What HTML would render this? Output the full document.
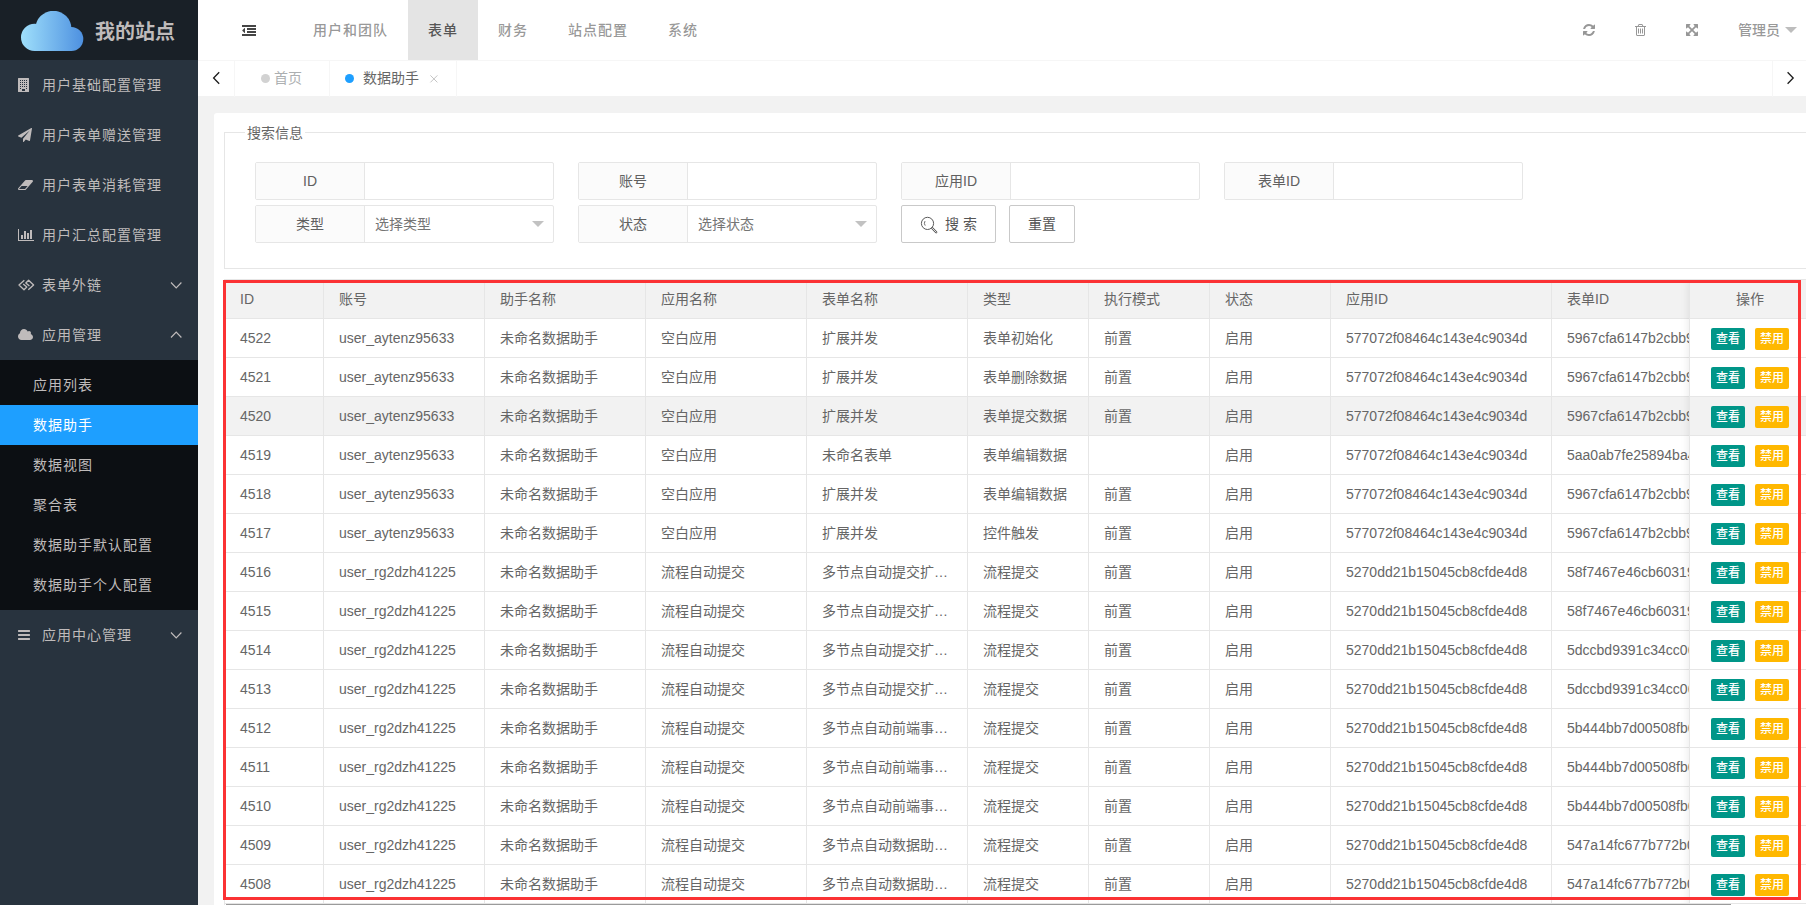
<!DOCTYPE html>
<html lang="zh-CN"><head><meta charset="utf-8"><title>我的站点</title>
<style>
*{box-sizing:border-box;margin:0;padding:0}
html,body{width:1806px;height:905px;overflow:hidden}
body{position:relative;background:#f2f2f2;font:14px/24px "Liberation Sans","Noto Sans CJK SC",sans-serif;color:#666}
svg{display:block}
.abs{position:absolute}
/* sidebar */
.side{position:absolute;left:0;top:0;width:198px;height:905px;background:#28333e}
.logo{position:absolute;left:0;top:0;width:198px;height:60px;background:#192027}
.logo h1{position:absolute;left:95px;top:2px;line-height:60px;font-size:20px;font-weight:700;color:#bfbbbb;letter-spacing:0;white-space:nowrap}
.mi{position:absolute;left:0;width:198px;height:50px;line-height:50px;color:#bfbbbb;white-space:nowrap}
.mi .tx{position:absolute;left:42px;top:0;letter-spacing:1px}
.mi svg{position:absolute}
.sub{position:absolute;left:0;top:360px;width:198px;height:250px;background:#0c0f13}
.si{position:absolute;left:0;width:198px;height:40px;line-height:40px;color:#bfbbbb;letter-spacing:1px;padding-left:33px;white-space:nowrap}
.si.on{background:#1e9fff;color:#fff}
/* header */
.hd{position:absolute;left:198px;top:0;width:1608px;height:60px;background:#fff}
.nav{font-weight:500;position:absolute;top:0;height:60px;line-height:60px;padding:0 20px;letter-spacing:1px;color:rgba(107,107,107,.7);white-space:nowrap}
.nav.on{background:#e4e4e4;color:#565656}
.user{font-weight:500;position:absolute;left:1540px;top:0;line-height:60px;color:rgba(107,107,107,.7);white-space:nowrap}
.tri{position:absolute;width:0;height:0;border:6px solid transparent;border-top-color:#c2c2c2}
/* tabs */
.tabs{position:absolute;left:198px;top:60px;width:1608px;height:36px;background:#fff;border-top:1px solid #f6f6f6}
.tabs .sep{position:absolute;top:0;width:1px;height:36px;background:#f6f6f6}
.tab{position:absolute;top:0;height:35px;line-height:35px;white-space:nowrap}
.dot{position:absolute;width:8px;height:8px;border-radius:50%}
/* card */
.card{position:absolute;left:214px;top:113px;width:1700px;height:900px;background:#fff;border-radius:3px}
.fs{position:absolute;left:224px;top:132px;width:1700px;height:137px;border:1px solid #e6e6e6}
.lg{position:absolute;left:245px;top:120px;height:26px;line-height:26px;padding:0 2px;background:#fff;color:#666;font-size:14px;white-space:nowrap}
.grp{position:absolute;width:299px;height:38px;border:1px solid #e6e6e6;border-radius:2px;background:#fff}
.grp .lb{position:absolute;left:0;top:0;width:109px;height:36px;line-height:36px;text-align:center;background:#fbfbfb;border-right:1px solid #e6e6e6;color:#606060;white-space:nowrap}
.grp .ph{position:absolute;left:119px;top:0;line-height:36px;color:#757575;white-space:nowrap}
.grp .tri{left:276px;top:15px}
.bt{position:absolute;top:205px;height:38px;border:1px solid #c9c9c9;border-radius:2px;background:#fff;color:#555;line-height:36px;white-space:nowrap}
/* table */
.tview{position:absolute;left:224px;top:279px;width:1600px;height:640px;border:1px solid #e6e6e6;background:#fff;overflow:hidden}
.tbl{position:absolute;left:0;top:0;border-collapse:separate;border-spacing:0;table-layout:fixed;width:1588px}
.tbl th,.tbl td{height:39px;border-right:1px solid #e6e6e6;border-bottom:1px solid #e6e6e6;font-weight:400;text-align:left;padding:0;color:#666}
.tbl th{background:#f2f2f2}
.tbl .c{height:38px;line-height:38px;padding:0 15px;overflow:hidden;white-space:nowrap}
.tbl tr.hov td{background:#f2f2f2}
.fixr{position:absolute;left:1464px;top:0;width:121px;height:640px;background:#fff;border-left:1px solid #e6e6e6;box-shadow:-1px 0 8px rgba(0,0,0,.08)}
.fh{height:39px;line-height:38px;text-align:center;background:#f2f2f2;border-bottom:1px solid #e6e6e6;color:#666}
.fr{position:relative;height:39px;border-bottom:1px solid #e6e6e6}
.fr.hov{background:#f2f2f2}
.btn{position:absolute;top:9px;width:34px;height:22px;line-height:22px;border-radius:2px;color:#fff;font-size:12px;font-weight:500;text-align:center;white-space:nowrap}
.btn.g{left:21px;background:#009688}
.btn.y{left:65px;background:#ffb800}
.redbox{position:absolute;left:223px;top:280px;width:1578px;height:620px;border:3px solid #fb3234}
.sb{position:absolute;left:226px;top:903px;width:1505px;height:2px;background:linear-gradient(#e4e4e4 0,#e4e4e4 50%,#9b9b9b 50%,#9b9b9b 100%)}

</style></head>
<body>
<div class="side">
  <div class="logo">
    <svg class="abs" style="left:21px;top:11px" width="63" height="40" viewBox="0 0 63 40"><defs><linearGradient id="cg" gradientUnits="userSpaceOnUse" x1="0" y1="0" x2="62.5" y2="0"><stop offset="0" stop-color="#9fdffb"/><stop offset="1" stop-color="#4d90e0"/></linearGradient></defs><g fill="url(#cg)"><circle cx="13.6" cy="26.4" r="13.6"/><circle cx="32.4" cy="17.9" r="18.1"/><circle cx="50.3" cy="28" r="12"/><rect x="13.6" y="28" width="36.7" height="12"/></g></svg>
    <h1>我的站点</h1>
  </div>
  <div class="mi" style="top:60px"><span class="tx">用户基础配置管理</span></div>
  <div class="mi" style="top:110px"><span class="tx">用户表单赠送管理</span></div>
  <div class="mi" style="top:160px"><span class="tx">用户表单消耗管理</span></div>
  <div class="mi" style="top:210px"><span class="tx">用户汇总配置管理</span></div>
  <div class="mi" style="top:260px"><span class="tx">表单外链</span></div>
  <div class="mi" style="top:310px"><span class="tx">应用管理</span></div>
  <div class="sub">
    <div class="si" style="top:5px">应用列表</div>
    <div class="si on" style="top:45px">数据助手</div>
    <div class="si" style="top:85px">数据视图</div>
    <div class="si" style="top:125px">聚合表</div>
    <div class="si" style="top:165px">数据助手默认配置</div>
    <div class="si" style="top:205px">数据助手个人配置</div>
  </div>
  <div class="mi" style="top:610px"><span class="tx">应用中心管理</span></div>

  <svg class="abs" style="left:18px;top:78px" width="11" height="14" viewBox="0 0 1408 1792" preserveAspectRatio="none"><path fill="#bfbbbb" fill-rule="evenodd" d="M64 0h1280q64 0 64 64v1664q0 64-64 64h-1280q-64 0-64-64v-1664q0-64 64-64zM256 256h128v128h-128zM512 256h128v128h-128zM768 256h128v128h-128zM1024 256h128v128h-128zM256 512h128v128h-128zM512 512h128v128h-128zM768 512h128v128h-128zM1024 512h128v128h-128zM256 768h128v128h-128zM512 768h128v128h-128zM768 768h128v128h-128zM1024 768h128v128h-128zM256 1024h128v128h-128zM512 1024h128v128h-128zM768 1024h128v128h-128zM1024 1024h128v128h-128zM256 1280h128v128h-128zM1024 1280h128v128h-128zM512 1408h384v256h-384z"/></svg>
  <svg class="abs" style="left:18px;top:128px" width="14.0003" height="14" viewBox="0 0 1792 1792" preserveAspectRatio="none"><path fill="#bfbbbb" fill-rule="evenodd" d="M1764 11q33 24 27 64l-256 1536q-5 29-32 45-14 8-31 8-11 0-24-5l-453-185-242 295q-18 23-49 23-13 0-22-4-19-7-30.500-23.500t-11.500-36.500v-349l864-1059-1069 925-395-162q-37-14-40-55-2-40 32-59l1664-960q15-9 32-9 20 0 36 11z"/></svg>
  <svg class="abs" style="left:18px;top:180px" width="14.9996" height="10" viewBox="0 256 1920 1280" preserveAspectRatio="none"><path fill="#bfbbbb" fill-rule="evenodd" d="M896 1408l336-384h-768l-336 384h768zm1013-1077q15 34 9.500 71.500t-30.500 65.500l-896 1024q-38 44-96 44h-768q-38 0-69.500-20.500t-47.500-54.500q-15-34-9.500-71.500t30.500-65.500l896-1024q38-44 96-44h768q38 0 69.500 20.500t47.500 54.500z"/></svg>
  <svg class="abs" style="left:18px;top:229px" width="16" height="12" viewBox="0 128 2048 1536" preserveAspectRatio="none"><path fill="#bfbbbb" fill-rule="evenodd" d="M640 896v512h-256v-512h256zm384-512v1024h-256v-1024h256zm1024 1152v128h-2048v-1536h128v1408h1920zm-640-896v768h-256v-768h256zm384-384v1152h-256v-1152h256z"/></svg>
  <svg class="abs" style="left:14px;top:274px" width="26" height="22" viewBox="14 274 26 22"><g fill="none" stroke="#bfbbbb" stroke-width="1.35" stroke-linejoin="round" stroke-linecap="butt"><path d="M24.3 280.2 L19 285 L24 289.7 L26.8 287.1 L23.2 283.9"/><path d="M28.3 289.8 L33.6 285 L28.6 280.3 L25.8 282.9 L29.4 286.1"/></g></svg>
  <svg class="abs" style="left:18px;top:329px" width="15" height="11" viewBox="0 128 1920 1408" preserveAspectRatio="none"><path fill="#bfbbbb" fill-rule="evenodd" d="M1920 1152q0 159-112.500 271.500t-271.500 112.500h-1088q-185 0-316.500-131.500t-131.500-316.500q0-132 71-241.500t187-163.500q-2-28-2-43 0-212 150-362t362-150q158 0 286.500 88t187.500 230q70-62 166-62 106 0 181 75t75 181q0 75-41 138 129 30 213 134.500t84 239.500z"/></svg>
  <svg class="abs" style="left:18px;top:630px" width="12" height="10" viewBox="0 256 1536 1280" preserveAspectRatio="none"><path fill="#bfbbbb" fill-rule="evenodd" d="M1536 1344v128q0 26-19 45t-45 19h-1408q-26 0-45-19t-19-45v-128q0-26 19-45t45-19h1408q26 0 45 19t19 45zm0-512v128q0 26-19 45t-45 19h-1408q-26 0-45-19t-19-45v-128q0-26 19-45t45-19h1408q26 0 45 19t19 45zm0-512v128q0 26-19 45t-45 19h-1408q-26 0-45-19t-19-45v-128q0-26 19-45t45-19h1408q26 0 45 19t19 45z"/></svg>
  <svg class="abs" style="left:168px;top:278px" width="16" height="14" viewBox="0 0 16 14"><path d="M3 4.5 L8.2 9.8 L13.4 4.5" fill="none" stroke="#bfbbbb" stroke-width="1.2"/></svg>
  <svg class="abs" style="left:168px;top:328px" width="16" height="14" viewBox="0 0 16 14"><path d="M3 9.5 L8.2 4.2 L13.4 9.5" fill="none" stroke="#bfbbbb" stroke-width="1.2"/></svg>
  <svg class="abs" style="left:168px;top:628px" width="16" height="14" viewBox="0 0 16 14"><path d="M3 4.5 L8.2 9.8 L13.4 4.5" fill="none" stroke="#bfbbbb" stroke-width="1.2"/></svg>
</div>
<div class="hd">
  <div class="nav" style="left:95px">用户和团队</div>
  <div class="nav on" style="left:210px">表单</div>
  <div class="nav" style="left:280px">财务</div>
  <div class="nav" style="left:350px">站点配置</div>
  <div class="nav" style="left:450px">系统</div>
  <svg class="abs" style="left:44px;top:25px" width="14" height="11" viewBox="0 128 1792 1408" preserveAspectRatio="none"><path fill="#454545" fill-rule="evenodd" d="M384 544v576q0 13-9.500 22.500t-22.500 9.500q-14 0-23-9l-288-288q-9-9-9-23t9-23l288-288q9-9 23-9 13 0 22.500 9.500t9.500 22.500zm1408 768v192q0 13-9.500 22.500t-22.500 9.500h-1728q-13 0-22.500-9.500t-9.500-22.500v-192q0-13 9.500-22.500t22.500-9.500h1728q13 0 22.500 9.500t9.500 22.500zm0-384v192q0 13-9.500 22.500t-22.500 9.500h-1088q-13 0-22.500-9.500t-9.500-22.500v-192q0-13 9.500-22.500t22.500-9.500h1088q13 0 22.500 9.500t9.500 22.500zm0-384v192q0 13-9.500 22.500t-22.500 9.500h-1088q-13 0-22.500-9.500t-9.500-22.500v-192q0-13 9.500-22.500t22.500-9.500h1088q13 0 22.500 9.500t9.500 22.500zm0-384v192q0 13-9.500 22.500t-22.500 9.500h-1728q-13 0-22.500-9.500t-9.500-22.500v-192q0-13 9.500-22.500t22.500-9.500h1728q13 0 22.500 9.500t9.500 22.500z"/></svg>
  <svg class="abs" style="left:1385px;top:24px" width="12" height="12" viewBox="0 128 1536 1536" preserveAspectRatio="none"><path fill="#979797" fill-rule="evenodd" d="M1511 1056q0 5-1 7-64 268-268 434.500t-478 166.500q-146 0-282.500-55t-243.500-157l-129 129q-19 19-45 19t-45-19-19-45v-448q0-26 19-45t45-19h448q26 0 45 19t19 45-19 45l-137 137q71 66 161 102t187 36q134 0 250-65t186-179q11-17 53-117 8-23 30-23h192q13 0 22.500 9.500t9.500 22.500zm25-800v448q0 26-19 45t-45 19h-448q-26 0-45-19t-19-45 19-45l138-138q-148-137-349-137-134 0-250 65t-186 179q-11 17-53 117-8 23-30 23h-199q-13 0-22.500-9.500t-9.500-22.500v-7q65-268 270-434.500t480-166.500q146 0 284 55.500t245 156.500l130-129q19-19 45-19t45 19 19 45z"/></svg>
  <svg class="abs" style="left:1437px;top:24px" width="11" height="12" viewBox="0 192 1408 1536" preserveAspectRatio="none"><path fill="#979797" fill-rule="evenodd" d="M512 800v576q0 14-9 23t-23 9h-64q-14 0-23-9t-9-23v-576q0-14 9-23t23-9h64q14 0 23 9t9 23zm256 0v576q0 14-9 23t-23 9h-64q-14 0-23-9t-9-23v-576q0-14 9-23t23-9h64q14 0 23 9t9 23zm256 0v576q0 14-9 23t-23 9h-64q-14 0-23-9t-9-23v-576q0-14 9-23t23-9h64q14 0 23 9t9 23zm128 724v-948h-896v948q0 22 7 40.500t14.500 27 10.500 8.500h832q3 0 10.500-8.500t14.500-27 7-40.500zm-672-1076h448l-48-117q-7-9-17-11h-317q-10 2-17 11zm928 32v64q0 14-9 23t-23 9h-96v948q0 83-47 143.500t-113 60.500h-832q-66 0-113-58.500t-47-141.500v-952h-96q-14 0-23-9t-9-23v-64q0-14 9-23t23-9h309l70-167q15-37 54-63t79-26h320q40 0 79 26t54 63l70 167h309q14 0 23 9t9 23z"/></svg>
  <svg class="abs" style="left:1488px;top:24px" width="12" height="12" viewBox="0 0 1536 1536" preserveAspectRatio="none"><path fill="#979797" fill-rule="evenodd" d="M1283 413l-355 355 355 355 144-144q29-31 70-14 39 17 39 59v448q0 26-19 45t-45 19h-448q-42 0-59-40-17-39 14-69l144-144-355-355-355 355 144 144q31 30 14 69-17 40-59 40h-448q-26 0-45-19t-19-45v-448q0-42 40-59 39-17 69 14l144 144 355-355-355-355-144 144q-19 19-45 19-12 0-24-5-40-17-40-59v-448q0-26 19-45t45-19h448q42 0 59 40 17 39-14 69l-144 144 355 355 355-355-144-144q-31-30-14-69 17-40 59-40h448q26 0 45 19t19 45v448q0 42-39 59-13 5-25 5-26 0-45-19z"/></svg>
  <div class="user">管理员</div>
  <div class="tri" style="left:1587px;top:27px;border-top-color:#bdbdbd"></div>
</div>
<div class="tabs">
  <div class="sep" style="left:36px"></div>
  <div class="sep" style="left:131px"></div>
  <div class="sep" style="left:258px"></div>
  <div class="sep" style="left:1574px"></div>
  <div class="dot" style="left:63px;top:13px;background:#d2d2d2;width:9px;height:9px"></div>
  <div class="tab" style="left:76px;color:#acafb1">首页</div>
  <div class="dot" style="left:147px;top:13px;background:#1e9fff;width:9px;height:9px"></div>
  <div class="tab" style="left:165px;color:#666">数据助手</div>
  <svg class="abs" style="left:10px;top:7px" width="16" height="20" viewBox="0 0 16 20"><path d="M11.2 4.2 L5.6 10 L11.2 15.8" fill="none" stroke="#1c1c1c" stroke-width="1.3"/></svg>
  <svg class="abs" style="left:1584px;top:7px" width="16" height="20" viewBox="0 0 16 20"><path d="M5.6 4.2 L11.2 10 L5.6 15.8" fill="none" stroke="#1c1c1c" stroke-width="1.3"/></svg>
  <svg class="abs" style="left:230px;top:12.4px" width="12" height="12" viewBox="0 0 12 12"><path d="M2.4 2.4 L9.4 9.4 M9.4 2.4 L2.4 9.4" fill="none" stroke="#c4c4c4" stroke-width="1"/></svg>
</div>
<div class="card"></div>
<div class="fs"></div>
<div class="lg">搜索信息</div>
<div class="grp" style="left:255px;top:162px"><div class="lb">ID</div></div>
<div class="grp" style="left:578px;top:162px"><div class="lb">账号</div></div>
<div class="grp" style="left:901px;top:162px"><div class="lb">应用ID</div></div>
<div class="grp" style="left:1224px;top:162px"><div class="lb">表单ID</div></div>
<div class="grp" style="left:255px;top:205px"><div class="lb">类型</div><div class="ph">选择类型</div><div class="tri"></div></div>
<div class="grp" style="left:578px;top:205px"><div class="lb">状态</div><div class="ph">选择状态</div><div class="tri"></div></div>
<div class="bt" style="left:901px;width:95px"><svg class="abs" style="left:17px;top:9px" width="20" height="20" viewBox="0 0 20 20"><circle cx="8.5" cy="8.4" r="6.1" fill="none" stroke="#5a5a5a" stroke-width="1"/><path d="M13.3 13.3 L17.2 17.2" stroke="#5a5a5a" stroke-width="2.3" stroke-linecap="round"/><path d="M13.4 13.4 L17.1 17.1" stroke="#fff" stroke-width="0.8" stroke-linecap="round"/><path d="M6 6.1 Q4.6 8.4 6.2 10.6" fill="none" stroke="#5a5a5a" stroke-width="0.9"/></svg><span class="abs" style="left:43px;top:0">搜 索</span></div>
<div class="bt" style="left:1009px;width:66px;text-align:center">重置</div>

<div class="tview">
<table class="tbl"><colgroup><col style="width:99px"><col style="width:161px"><col style="width:161px"><col style="width:161px"><col style="width:161px"><col style="width:121px"><col style="width:121px"><col style="width:121px"><col style="width:221px"><col style="width:261px"></colgroup>
<thead><tr><th><div class="c">ID</div></th><th><div class="c">账号</div></th><th><div class="c">助手名称</div></th><th><div class="c">应用名称</div></th><th><div class="c">表单名称</div></th><th><div class="c">类型</div></th><th><div class="c">执行模式</div></th><th><div class="c">状态</div></th><th><div class="c">应用ID</div></th><th><div class="c">表单ID</div></th></tr></thead><tbody>
<tr><td><div class="c">4522</div></td><td><div class="c">user_aytenz95633</div></td><td><div class="c">未命名数据助手</div></td><td><div class="c">空白应用</div></td><td><div class="c">扩展并发</div></td><td><div class="c">表单初始化</div></td><td><div class="c">前置</div></td><td><div class="c">启用</div></td><td><div class="c">577072f08464c143e4c9034d</div></td><td><div class="c">5967cfa6147b2cbb9</div></td></tr>
<tr><td><div class="c">4521</div></td><td><div class="c">user_aytenz95633</div></td><td><div class="c">未命名数据助手</div></td><td><div class="c">空白应用</div></td><td><div class="c">扩展并发</div></td><td><div class="c">表单删除数据</div></td><td><div class="c">前置</div></td><td><div class="c">启用</div></td><td><div class="c">577072f08464c143e4c9034d</div></td><td><div class="c">5967cfa6147b2cbb9</div></td></tr>
<tr class="hov"><td><div class="c">4520</div></td><td><div class="c">user_aytenz95633</div></td><td><div class="c">未命名数据助手</div></td><td><div class="c">空白应用</div></td><td><div class="c">扩展并发</div></td><td><div class="c">表单提交数据</div></td><td><div class="c">前置</div></td><td><div class="c">启用</div></td><td><div class="c">577072f08464c143e4c9034d</div></td><td><div class="c">5967cfa6147b2cbb9</div></td></tr>
<tr><td><div class="c">4519</div></td><td><div class="c">user_aytenz95633</div></td><td><div class="c">未命名数据助手</div></td><td><div class="c">空白应用</div></td><td><div class="c">未命名表单</div></td><td><div class="c">表单编辑数据</div></td><td><div class="c"></div></td><td><div class="c">启用</div></td><td><div class="c">577072f08464c143e4c9034d</div></td><td><div class="c">5aa0ab7fe25894ba4</div></td></tr>
<tr><td><div class="c">4518</div></td><td><div class="c">user_aytenz95633</div></td><td><div class="c">未命名数据助手</div></td><td><div class="c">空白应用</div></td><td><div class="c">扩展并发</div></td><td><div class="c">表单编辑数据</div></td><td><div class="c">前置</div></td><td><div class="c">启用</div></td><td><div class="c">577072f08464c143e4c9034d</div></td><td><div class="c">5967cfa6147b2cbb9</div></td></tr>
<tr><td><div class="c">4517</div></td><td><div class="c">user_aytenz95633</div></td><td><div class="c">未命名数据助手</div></td><td><div class="c">空白应用</div></td><td><div class="c">扩展并发</div></td><td><div class="c">控件触发</div></td><td><div class="c">前置</div></td><td><div class="c">启用</div></td><td><div class="c">577072f08464c143e4c9034d</div></td><td><div class="c">5967cfa6147b2cbb9</div></td></tr>
<tr><td><div class="c">4516</div></td><td><div class="c">user_rg2dzh41225</div></td><td><div class="c">未命名数据助手</div></td><td><div class="c">流程自动提交</div></td><td><div class="c">多节点自动提交扩…</div></td><td><div class="c">流程提交</div></td><td><div class="c">前置</div></td><td><div class="c">启用</div></td><td><div class="c">5270dd21b15045cb8cfde4d8</div></td><td><div class="c">58f7467e46cb60319</div></td></tr>
<tr><td><div class="c">4515</div></td><td><div class="c">user_rg2dzh41225</div></td><td><div class="c">未命名数据助手</div></td><td><div class="c">流程自动提交</div></td><td><div class="c">多节点自动提交扩…</div></td><td><div class="c">流程提交</div></td><td><div class="c">前置</div></td><td><div class="c">启用</div></td><td><div class="c">5270dd21b15045cb8cfde4d8</div></td><td><div class="c">58f7467e46cb60319</div></td></tr>
<tr><td><div class="c">4514</div></td><td><div class="c">user_rg2dzh41225</div></td><td><div class="c">未命名数据助手</div></td><td><div class="c">流程自动提交</div></td><td><div class="c">多节点自动提交扩…</div></td><td><div class="c">流程提交</div></td><td><div class="c">前置</div></td><td><div class="c">启用</div></td><td><div class="c">5270dd21b15045cb8cfde4d8</div></td><td><div class="c">5dccbd9391c34cc06</div></td></tr>
<tr><td><div class="c">4513</div></td><td><div class="c">user_rg2dzh41225</div></td><td><div class="c">未命名数据助手</div></td><td><div class="c">流程自动提交</div></td><td><div class="c">多节点自动提交扩…</div></td><td><div class="c">流程提交</div></td><td><div class="c">前置</div></td><td><div class="c">启用</div></td><td><div class="c">5270dd21b15045cb8cfde4d8</div></td><td><div class="c">5dccbd9391c34cc06</div></td></tr>
<tr><td><div class="c">4512</div></td><td><div class="c">user_rg2dzh41225</div></td><td><div class="c">未命名数据助手</div></td><td><div class="c">流程自动提交</div></td><td><div class="c">多节点自动前端事…</div></td><td><div class="c">流程提交</div></td><td><div class="c">前置</div></td><td><div class="c">启用</div></td><td><div class="c">5270dd21b15045cb8cfde4d8</div></td><td><div class="c">5b444bb7d00508fb6</div></td></tr>
<tr><td><div class="c">4511</div></td><td><div class="c">user_rg2dzh41225</div></td><td><div class="c">未命名数据助手</div></td><td><div class="c">流程自动提交</div></td><td><div class="c">多节点自动前端事…</div></td><td><div class="c">流程提交</div></td><td><div class="c">前置</div></td><td><div class="c">启用</div></td><td><div class="c">5270dd21b15045cb8cfde4d8</div></td><td><div class="c">5b444bb7d00508fb6</div></td></tr>
<tr><td><div class="c">4510</div></td><td><div class="c">user_rg2dzh41225</div></td><td><div class="c">未命名数据助手</div></td><td><div class="c">流程自动提交</div></td><td><div class="c">多节点自动前端事…</div></td><td><div class="c">流程提交</div></td><td><div class="c">前置</div></td><td><div class="c">启用</div></td><td><div class="c">5270dd21b15045cb8cfde4d8</div></td><td><div class="c">5b444bb7d00508fb6</div></td></tr>
<tr><td><div class="c">4509</div></td><td><div class="c">user_rg2dzh41225</div></td><td><div class="c">未命名数据助手</div></td><td><div class="c">流程自动提交</div></td><td><div class="c">多节点自动数据助…</div></td><td><div class="c">流程提交</div></td><td><div class="c">前置</div></td><td><div class="c">启用</div></td><td><div class="c">5270dd21b15045cb8cfde4d8</div></td><td><div class="c">547a14fc677b772b0</div></td></tr>
<tr><td><div class="c">4508</div></td><td><div class="c">user_rg2dzh41225</div></td><td><div class="c">未命名数据助手</div></td><td><div class="c">流程自动提交</div></td><td><div class="c">多节点自动数据助…</div></td><td><div class="c">流程提交</div></td><td><div class="c">前置</div></td><td><div class="c">启用</div></td><td><div class="c">5270dd21b15045cb8cfde4d8</div></td><td><div class="c">547a14fc677b772b0</div></td></tr>
</tbody></table>
<div class="fixr"><div class="fh">操作</div>
<div class="fr"><span class="btn g">查看</span><span class="btn y">禁用</span></div>
<div class="fr"><span class="btn g">查看</span><span class="btn y">禁用</span></div>
<div class="fr hov"><span class="btn g">查看</span><span class="btn y">禁用</span></div>
<div class="fr"><span class="btn g">查看</span><span class="btn y">禁用</span></div>
<div class="fr"><span class="btn g">查看</span><span class="btn y">禁用</span></div>
<div class="fr"><span class="btn g">查看</span><span class="btn y">禁用</span></div>
<div class="fr"><span class="btn g">查看</span><span class="btn y">禁用</span></div>
<div class="fr"><span class="btn g">查看</span><span class="btn y">禁用</span></div>
<div class="fr"><span class="btn g">查看</span><span class="btn y">禁用</span></div>
<div class="fr"><span class="btn g">查看</span><span class="btn y">禁用</span></div>
<div class="fr"><span class="btn g">查看</span><span class="btn y">禁用</span></div>
<div class="fr"><span class="btn g">查看</span><span class="btn y">禁用</span></div>
<div class="fr"><span class="btn g">查看</span><span class="btn y">禁用</span></div>
<div class="fr"><span class="btn g">查看</span><span class="btn y">禁用</span></div>
<div class="fr"><span class="btn g">查看</span><span class="btn y">禁用</span></div>
</div>
</div>
<div class="sb"></div>
<div class="redbox"></div>
</body></html>
